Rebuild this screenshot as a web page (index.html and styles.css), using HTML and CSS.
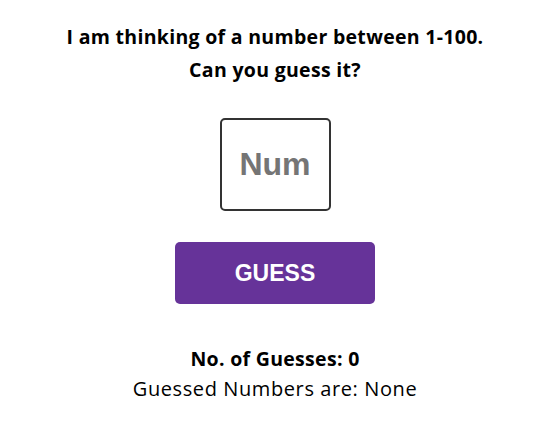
FILE: index.html
```html
<!DOCTYPE html>
<html>
<head>
<meta charset="utf-8">
<link rel="stylesheet" href="styles.css">
</head>
<body>
<main class="game">
  <h1 class="title">I am thinking of a number between 1-100.<br>Can you guess it?</h1>
  <input class="num-input" type="text" placeholder="Num">
  <button class="guess-btn">GUESS</button>
  <p class="count">No. of Guesses: 0</p>
  <p class="list">Guessed Numbers are: None</p>
</main>
</body>
</html>
```
FILE: styles.css
```css
html, body {
  margin: 0;
  padding: 0;
  background: #ffffff;
}
.game {
  display: flex;
  flex-direction: column;
  align-items: center;
  font-family: "Open Sans", "Noto Sans", sans-serif;
  color: #000;
  padding: 20px 0 0 6px;
}
.title {
  margin: 0;
  font-size: 19.5px;
  font-weight: 700;
  letter-spacing: 0.3px;
  line-height: 33px;
  text-align: center;
}
.num-input {
  box-sizing: border-box;
  margin-top: 32px;
  width: 111px;
  height: 93px;
  border: 2px solid #333;
  border-radius: 5px;
  font-family: "Liberation Sans", Arial, sans-serif;
  font-size: 32px;
  font-weight: 700;
  text-align: center;
  padding: 0;
  outline: none;
}
.num-input::placeholder {
  color: #757575;
}
.guess-btn {
  margin-top: 31px;
  width: 200px;
  height: 62px;
  border: none;
  border-radius: 5px;
  background: #663399;
  color: #fff;
  font-family: "Liberation Sans", Arial, sans-serif;
  font-size: 23px;
  font-weight: 700;
}
.count {
  margin: 40px 0 0;
  font-size: 19.5px;
  font-weight: 700;
  letter-spacing: 0.3px;
  line-height: 30px;
}
.list {
  margin: 0;
  font-size: 20px;
  font-weight: 400;
  letter-spacing: 0.6px;
  line-height: 30px;
}
```
